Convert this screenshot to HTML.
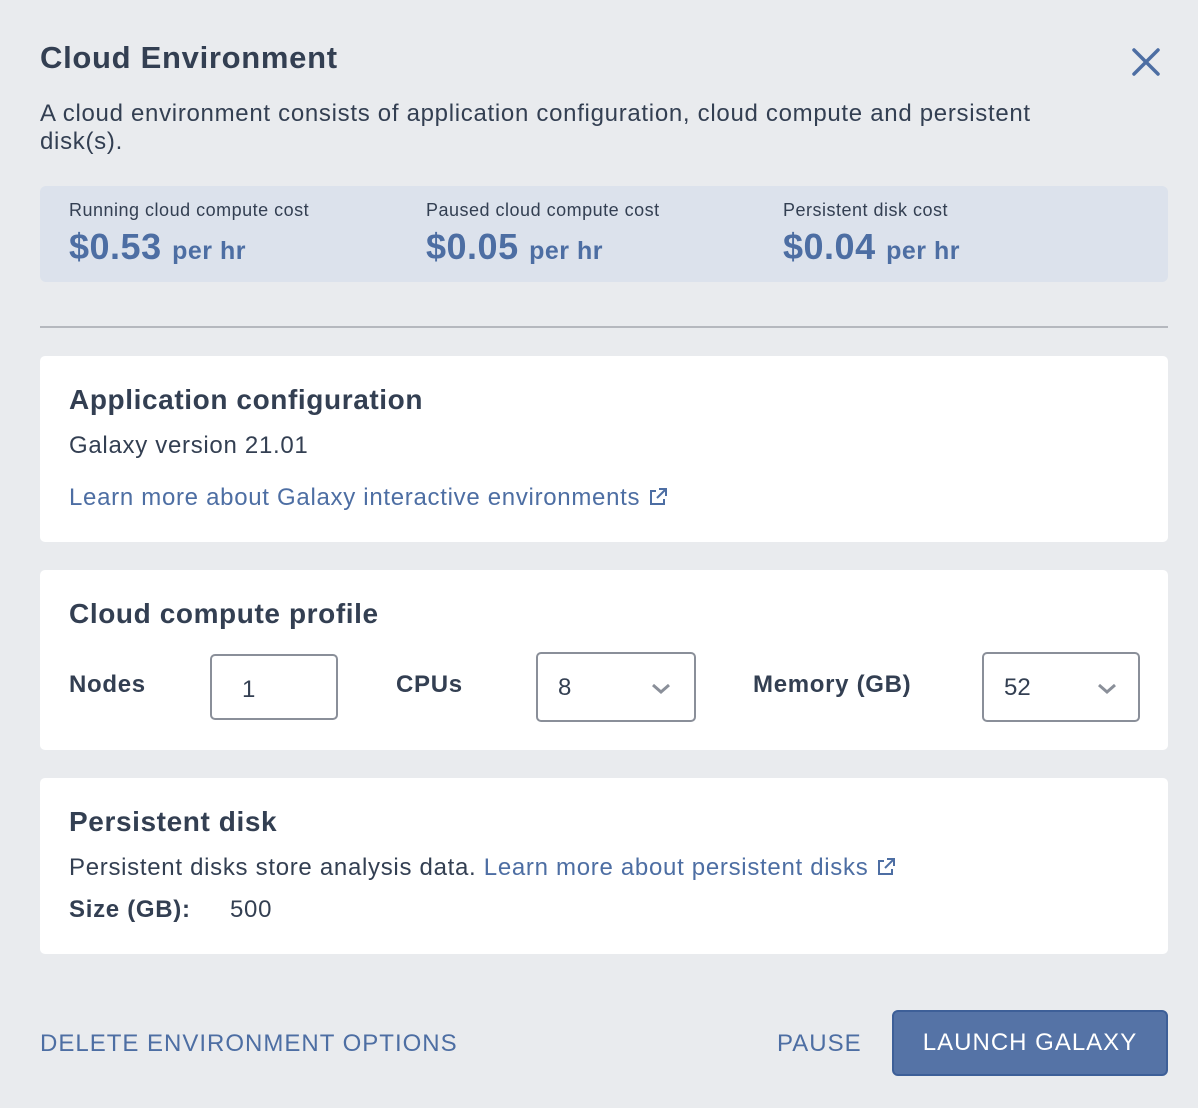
<!DOCTYPE html>
<html><head><meta charset="utf-8"><style>
*{margin:0;padding:0;box-sizing:border-box}
body{width:1198px;height:1108px;background:#e9ebee;font-family:"Liberation Sans",sans-serif;color:#333f52;position:relative;overflow:hidden}
.a{position:absolute;white-space:nowrap}
.card{position:absolute;left:40px;width:1128px;background:#fff;border-radius:5px}
.lk{color:#4d6ea3}
.h{font-size:28px;font-weight:bold;letter-spacing:0.6px}
.t{font-size:24px;letter-spacing:0.7px}
.box{position:absolute;border:2px solid #8a8f99;border-radius:5px;background:#fff;font-size:24px}
.cost .l{font-size:18px;letter-spacing:0.5px;color:#333f52}
.cost .v{font-size:36px;font-weight:bold;color:#4d6ea3;letter-spacing:0.5px}
.cost .v span{font-size:25px}
</style></head><body>
<div class="a" style="left:40px;top:40px;font-size:31px;font-weight:bold;letter-spacing:0.7px">Cloud Environment</div>
<svg class="a" style="left:1130px;top:46px" width="32" height="32" viewBox="0 0 32 32"><path d="M4 4L28 28M28 4L4 28" stroke="#4d6ea3" stroke-width="3.5" stroke-linecap="round"/></svg>
<div class="a t" style="left:40px;top:100px;line-height:28px">A cloud environment consists of application configuration, cloud compute and persistent<br>disk(s).</div>
<div class="a cost" style="left:40px;top:186px;width:1128px;height:96px;background:#dce2ec;border-radius:6px">
 <div class="a l" style="left:29px;top:14px">Running cloud compute cost</div>
 <div class="a v" style="left:29px;top:40px">$0.53 <span>per hr</span></div>
 <div class="a l" style="left:386px;top:14px">Paused cloud compute cost</div>
 <div class="a v" style="left:386px;top:40px">$0.05 <span>per hr</span></div>
 <div class="a l" style="left:743px;top:14px">Persistent disk cost</div>
 <div class="a v" style="left:743px;top:40px">$0.04 <span>per hr</span></div>
</div>
<div class="a" style="left:40px;top:326px;width:1128px;height:2px;background:#b5b8be"></div>
<div class="card" style="top:356px;height:186px">
 <div class="a h" style="left:29px;top:28px">Application configuration</div>
 <div class="a t" style="left:29px;top:76px">Galaxy version 21.01</div>
 <div class="a t lk" style="left:29px;top:128px">Learn more about Galaxy interactive environments <svg width="20" height="20" viewBox="0 0 20 20" style="vertical-align:-2px"><path d="M8 4H3v13h13v-5M11 2h7v7M18 2L9 11" fill="none" stroke="#4d6ea3" stroke-width="2"/></svg></div>
</div>
<div class="card" style="top:570px;height:180px">
 <div class="a h" style="left:29px;top:28px">Cloud compute profile</div>
 <div class="a t" style="left:29px;top:101px;font-weight:bold">Nodes</div>
 <div class="box" style="left:170px;top:84px;width:128px;height:66px"><span class="a" style="left:30px;top:20px">1</span></div>
 <div class="a t" style="left:356px;top:101px;font-weight:bold">CPUs</div>
 <div class="box" style="left:496px;top:82px;width:160px;height:70px"><span class="a" style="left:20px;top:20px">8</span><svg class="a" style="left:112px;top:28px" width="22" height="14" viewBox="0 0 22 14"><path d="M3 3l8 7 8-7" fill="none" stroke="#8a8f99" stroke-width="3"/></svg></div>
 <div class="a t" style="left:713px;top:101px;font-weight:bold">Memory (GB)</div>
 <div class="box" style="left:942px;top:82px;width:158px;height:70px"><span class="a" style="left:20px;top:20px">52</span><svg class="a" style="left:112px;top:28px" width="22" height="14" viewBox="0 0 22 14"><path d="M3 3l8 7 8-7" fill="none" stroke="#8a8f99" stroke-width="3"/></svg></div>
</div>
<div class="card" style="top:778px;height:176px">
 <div class="a h" style="left:29px;top:28px">Persistent disk</div>
 <div class="a t" style="left:29px;top:76px">Persistent disks store analysis data. <span class="lk">Learn more about persistent disks <svg width="20" height="20" viewBox="0 0 20 20" style="vertical-align:-2px"><path d="M8 4H3v13h13v-5M11 2h7v7M18 2L9 11" fill="none" stroke="#4d6ea3" stroke-width="2"/></svg></span></div>
 <div class="a t" style="left:29px;top:118px;font-weight:bold">Size (GB):</div>
 <div class="a t" style="left:190px;top:118px">500</div>
</div>
<div class="a t lk" style="left:40px;top:1030px;letter-spacing:1px">DELETE ENVIRONMENT OPTIONS</div>
<div class="a t lk" style="left:777px;top:1030px;letter-spacing:1px">PAUSE</div>
<div class="a" style="left:892px;top:1010px;width:276px;height:66px;background:#5573a6;border:2px solid #3d5f98;border-radius:6px;color:#fff;font-size:24px;letter-spacing:1px;text-align:center;line-height:62px">LAUNCH GALAXY</div>
</body></html>
